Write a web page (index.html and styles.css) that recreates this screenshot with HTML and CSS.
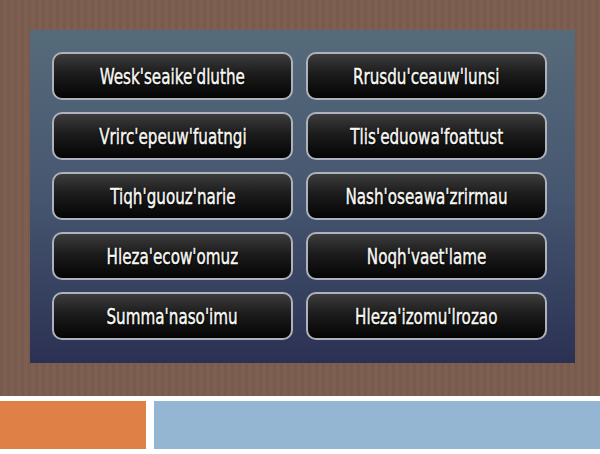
FILE: index.html
```html
<!DOCTYPE html>
<html lang="en">
<head>
  <meta charset="UTF-8" />
  <title>Word Grid</title>
  <link rel="stylesheet" href="styles.css">
</head>
<body>
  <div class="stage">
    <div class="panel">
      <button class="word-btn"><span>Wesk'seaike'dluthe</span></button>
      <button class="word-btn"><span>Rrusdu'ceauw'lunsi</span></button>
      <button class="word-btn"><span>Vrirc'epeuw'fuatngi</span></button>
      <button class="word-btn"><span>Tlis'eduowa'foattust</span></button>
      <button class="word-btn"><span>Tiqh'guouz'narie</span></button>
      <button class="word-btn"><span>Nash'oseawa'zrirmau</span></button>
      <button class="word-btn"><span>Hleza'ecow'omuz</span></button>
      <button class="word-btn"><span>Noqh'vaet'lame</span></button>
      <button class="word-btn"><span>Summa'naso'imu</span></button>
      <button class="word-btn"><span>Hleza'izomu'lrozao</span></button>
    </div>
  </div>
  <div class="footer">
    <div class="bar-orange"></div>
    <div class="bar-blue"></div>
  </div>
</body>
</html>
```

FILE: styles.css
```css
body {
  margin: 0;
  background: #fff;
  font-family: "DejaVu Sans", sans-serif;
}
.stage {
  height: 366px;
  padding-top: 30px;
  padding-left: 30px;
  background-color: #7b5d4f;
  background-image: repeating-linear-gradient(90deg, rgba(0,0,0,0.025) 0 3px, rgba(255,255,255,0.015) 3px 7px);
}
.panel {
  width: 523px;
  height: 311px;
  padding: 22px 0 0 22px;
  background: linear-gradient(180deg, #566b7a 0%, #465670 50%, #2b3153 100%);
  display: grid;
  grid-template-columns: 241px 241px;
  grid-auto-rows: 48px;
  column-gap: 13px;
  row-gap: 12px;
  align-content: start;
}
.word-btn {
  font-family: "DejaVu Sans", sans-serif;
  font-size: 22px;
  color: #f8f8f4;
  text-shadow: 0 0 2px #000, 1px 1px 1px #000, 0 0 1px #000;
  border: 2px solid #aeb2ba;
  border-radius: 10px;
  background: linear-gradient(180deg, #3c3c3c 0%, #1c1c1c 45%, #040404 100%);
  padding: 0;
  cursor: pointer;
}
/* the lettering in the shot is a narrow face, none is installed */
.word-btn span {
  display: inline-block;
  transform: scaleX(0.69);
  white-space: nowrap;
  -webkit-text-stroke: 0.5px #f8f8f4;
}
.footer {
  display: flex;
  gap: 8px;
  margin-top: 5px;
  height: 48px;
}
.bar-orange {
  width: 146px;
  background: #df8147;
}
.bar-blue {
  flex: 1;
  background: #95b6d2;
}
```
